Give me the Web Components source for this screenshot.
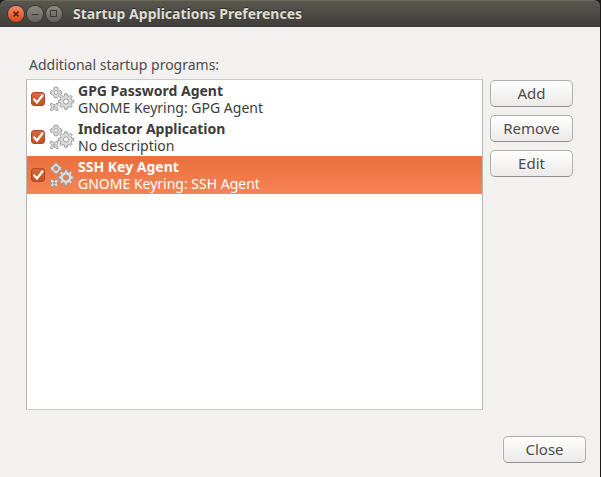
<!DOCTYPE html>
<html lang="en">
<head>
<meta charset="utf-8">
<title>Startup Applications Preferences</title>
<style>
  html, body {
    height: 100%;
    margin: 0;
  }

  body {
    --color-text: #4c4c4c;
    --color-list-text: #3c3c3c;
    --color-border: #b9b6b2;
    background: #1c1b19;
    color: var(--color-text);
    font: 14px/17px "Noto Sans", "Open Sans", sans-serif;
  }
</style>
</head>
<body>
<app-window heading="Startup Applications Preferences">
  <startup-list label="Additional startup programs:">
    <startup-item name="GPG Password Agent" description="GNOME Keyring: GPG Agent"></startup-item>
    <startup-item name="Indicator Application" description="No description"></startup-item>
    <startup-item name="SSH Key Agent" description="GNOME Keyring: SSH Agent" selected></startup-item>
  </startup-list>
  <app-button slot="actions">Add</app-button>
  <app-button slot="actions">Remove</app-button>
  <app-button slot="actions">Edit</app-button>
  <app-button slot="footer">Close</app-button>
</app-window>

<script>
class AppWindow extends HTMLElement {
  constructor() {
    super();
    this.attachShadow({ mode: 'open' });
  }

  connectedCallback() {
    this.shadowRoot.innerHTML = `
      <style>
        :host {
          display: flex;
          flex-direction: column;
          box-sizing: border-box;
          min-height: 100%;
          border-right: 1px solid #1c1b19;
        }

        header {
          display: flex;
          align-items: center;
          box-sizing: border-box;
          height: 27px;
          padding: 0 8px;
          border-top: 1px solid #6b685c;
          border-bottom: 1px solid #383733;
          border-radius: 6px 6px 0 0;
          background: linear-gradient(#59574e, #3f3e3a);
        }

        .controls {
          display: flex;
          gap: 3px;
        }

        h1 {
          margin: 0 0 0 11px;
          color: #dfdbd2;
          font-size: 14px;
          font-weight: bold;
          text-shadow: 0 -1px #2c2b28;
          white-space: nowrap;
        }

        main {
          display: flex;
          flex: 1;
          flex-direction: column;
          gap: 26px;
          padding: 29px 14px 14px 26px;
          background: #f2f1f0;
        }

        .content {
          display: flex;
          flex: 1;
          gap: 7px;
          padding-right: 13px;
        }

        slot[name="actions"] {
          display: flex;
          flex-direction: column;
          gap: 8px;
          padding-top: 24px;
        }

        footer {
          display: flex;
          justify-content: flex-end;
        }
      </style>
      <header>
        <div class="controls">
          <window-control action="Close"></window-control>
          <window-control action="Minimize"></window-control>
          <window-control action="Maximize"></window-control>
        </div>
        <h1>${this.getAttribute('heading')}</h1>
      </header>
      <main>
        <div class="content">
          <slot></slot>
          <slot name="actions"></slot>
        </div>
        <footer><slot name="footer"></slot></footer>
      </main>
    `;
  }
}

const controlGlyphs = {
  Close: '<path d="M5.5 5.5l5 5m0-5l-5 5" stroke-width="1.6"/>',
  Minimize: '<path d="M4.5 8.5h7"/>',
  Maximize: '<path d="M4.5 4.5h6v6h-6z"/>'
};

class WindowControl extends HTMLElement {
  constructor() {
    super();
    this.attachShadow({ mode: 'open' });
  }

  connectedCallback() {
    const action = this.getAttribute('action');
    const isClose = action === 'Close';

    this.shadowRoot.innerHTML = `
      <style>
        :host {
          display: block;
        }

        button {
          display: block;
          width: 16px;
          height: 16px;
          padding: 0;
          border: 0;
          border-radius: 50%;
          background: ${isClose ? 'linear-gradient(#f7866a, #df4a16)' : 'linear-gradient(#8b8981, #65635c)'};
          box-shadow: 0 0 0 1px #3b3a35;
        }

        svg {
          display: block;
          fill: none;
          stroke: ${isClose ? '#4b2114' : '#3a3934'};
        }
      </style>
      <button type="button" aria-label="${action}">
        <svg width="16" height="16" viewBox="0 0 16 16">${controlGlyphs[action]}</svg>
      </button>
    `;
  }
}

class AppButton extends HTMLElement {
  constructor() {
    super();
    this.attachShadow({ mode: 'open' });
  }

  connectedCallback() {
    this.shadowRoot.innerHTML = `
      <style>
        :host {
          display: block;
        }

        button {
          display: block;
          box-sizing: border-box;
          min-width: 83px;
          height: 27px;
          padding: 0 10px;
          border: 1px solid #b1afac;
          border-bottom-color: #92908d;
          border-radius: 5px;
          background: linear-gradient(#fefefe, #ebeae9);
          color: inherit;
          font: inherit;
          font-size: 15px;
        }
      </style>
      <button type="button"><slot></slot></button>
    `;
  }
}

class StartupList extends HTMLElement {
  constructor() {
    super();
    this.attachShadow({ mode: 'open' });
  }

  connectedCallback() {
    this.shadowRoot.innerHTML = `
      <style>
        :host {
          display: flex;
          flex: 1;
          flex-direction: column;
          gap: 6px;
          min-width: 0;
        }

        .label {
          padding-left: 3px;
        }

        .items {
          flex: 1;
          border: 1px solid var(--color-border);
          border-top-color: #cbc9c6;
          border-bottom-color: #cbc9c6;
          background: #fff;
          color: var(--color-list-text);
        }
      </style>
      <div class="label" id="label">${this.getAttribute('label')}</div>
      <div class="items" role="group" aria-labelledby="label"><slot></slot></div>
    `;
  }
}

class StartupItem extends HTMLElement {
  constructor() {
    super();
    this.attachShadow({ mode: 'open' });
  }

  /**
   * Outline of a gear: a closed path of teeth with a round hole in the middle.
   */
  gear(cx, cy, outer, inner, teeth, bore) {
    const points = [];
    const step = Math.PI * 2 / teeth;
    for (let i = 0; i < teeth; i++) {
      [[-0.3, inner], [-0.2, outer], [0.2, outer], [0.3, inner]].forEach(([offset, radius]) => {
        const angle = (i + offset) * step;
        points.push(`${(cx + Math.cos(angle) * radius).toFixed(2)} ${(cy + Math.sin(angle) * radius).toFixed(2)}`);
      });
    }
    return `M${points.join('L')}Z${this.hole(cx, cy, bore)}`;
  }

  hole(cx, cy, r) {
    return `M${cx - r} ${cy}a${r} ${r} 0 1 0 ${r * 2} 0a${r} ${r} 0 1 0 ${-r * 2} 0Z`;
  }

  connectedCallback() {
    this.shadowRoot.innerHTML = `
      <style>
        :host {
          display: block;
        }

        :host([selected]) {
          background: linear-gradient(#e96f3c, #f78354);
          color: #fff;
        }

        label {
          display: flex;
          align-items: center;
          height: 38px;
          padding-left: 4px;
        }

        input {
          appearance: none;
          box-sizing: border-box;
          width: 14px;
          height: 14px;
          margin: 0;
          border: 1px solid #a84a2b;
          border-radius: 3px;
          background: linear-gradient(#d4693e, #c5501f);
        }

        .check {
          display: grid;
          flex: none;
          margin-right: 4px;
        }

        .check > * {
          grid-area: 1 / 1;
        }

        .mark {
          fill: none;
          stroke: #fff;
          stroke-width: 2.2;
          pointer-events: none;
          visibility: hidden;
        }

        input:checked + .mark {
          visibility: visible;
        }

        .gears {
          flex: none;
          margin-right: 3px;
          fill: #dcdcdc;
          fill-rule: evenodd;
          stroke: #9a9a9a;
          stroke-linejoin: round;
        }

        .text {
          display: flex;
          flex-direction: column;
          white-space: nowrap;
        }
      </style>
      <label>
        <span class="check">
          <input type="checkbox" checked>
          <svg class="mark" width="14" height="14" viewBox="0 0 14 14"><path d="M2.5 6.8l3.4 3.7L12 2.8"/></svg>
        </span>
        <svg class="gears" width="26" height="26" viewBox="0 0 26 26">
          <path d="M5.5 1.2h3l.6 1.6 1.6 1.6 1.6.6v3l-1.600.6-1.600 1.600-.6 1.600h-3l-.6-1.600-1.600-1.600-1.600-.6v-3l1.600-.6 1.600-1.600z${this.hole(7, 6.5, 1.9)}"/>
          <path d="M1.5 17.5h2l1 1h1.5l1-1h2v2l-1 1v1.500l1 1v1.500h-2l-1-1h-1.500l-1 1h-2v-1.500l1-1v-1.500l-1-1z${this.hole(5.2, 21, 1)}" stroke-width=".9"/>
          <path d="${this.gear(17, 15.5, 7.8, 5.9, 8, 2.6)}"/>
        </svg>
        <span class="text">
          <b>${this.getAttribute('name')}</b>
          <span>${this.getAttribute('description')}</span>
        </span>
      </label>
    `;
  }
}

customElements.define('window-control', WindowControl);
customElements.define('app-button', AppButton);
customElements.define('startup-item', StartupItem);
customElements.define('startup-list', StartupList);
customElements.define('app-window', AppWindow);
</script>
</body>
</html>
